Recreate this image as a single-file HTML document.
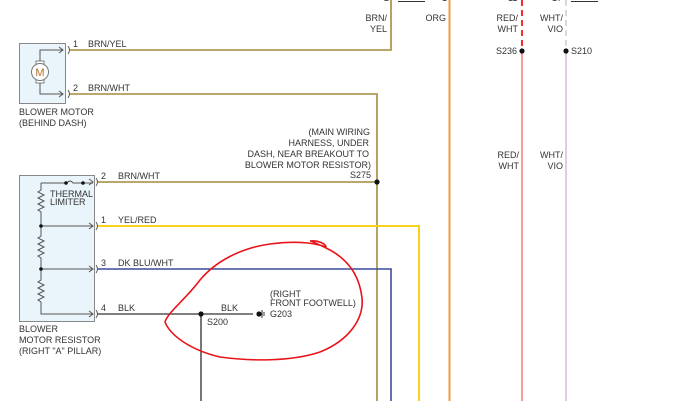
<!DOCTYPE html>
<html><head><style>
html,body{margin:0;padding:0;background:#fff;width:685px;height:401px;overflow:hidden}
svg text{font-family:"Liberation Sans",sans-serif;font-size:9px;fill:#333}
</style></head><body>
<svg width="685" height="401" viewBox="0 0 685 401" xmlns="http://www.w3.org/2000/svg">
<!-- top partial -->
<text x="384" y="1">2</text>
<text x="398" y="0">ABCDE</text>
<line x1="398" y1="1.5" x2="425" y2="1.5" stroke="#333"/>
<text x="442" y="1">1</text>
<text x="508" y="1">11</text>
<text x="552" y="1">17</text>
<text x="571" y="0">ABCDE</text>
<line x1="571" y1="1.5" x2="598" y2="1.5" stroke="#333"/>
<!-- vertical wires -->
<path d="M391 0V50H70" stroke="#a48a3c" stroke-width="1.6" fill="none"/>
<path d="M70 94H377V401" stroke="#a48a3c" stroke-width="1.6" fill="none"/>
<line x1="449.5" y1="0" x2="449.5" y2="401" stroke="#f39a3c" stroke-width="2"/>
<line x1="522" y1="0" x2="522" y2="50" stroke="#f01818" stroke-width="1.8" stroke-dasharray="6,4"/>
<line x1="522" y1="50" x2="522" y2="401" stroke="#f57a7a" stroke-width="1.5"/>
<line x1="566" y1="0" x2="566" y2="50" stroke="#ccc" stroke-width="1.5" stroke-dasharray="6,4"/>
<line x1="566" y1="50" x2="566" y2="401" stroke="#dcb5e6" stroke-width="1.5"/>
<circle cx="522" cy="51" r="2.6" fill="#111"/>
<circle cx="566" cy="51" r="2.6" fill="#111"/>
<text x="387" y="21" text-anchor="end">BRN/</text>
<text x="387" y="32" text-anchor="end">YEL</text>
<text x="446" y="21" text-anchor="end">ORG</text>
<text x="518" y="21" text-anchor="end">RED/</text>
<text x="518" y="32" text-anchor="end">WHT</text>
<text x="563" y="21" text-anchor="end">WHT/</text>
<text x="563" y="32" text-anchor="end">VIO</text>
<text x="517" y="54" text-anchor="end">S236</text>
<text x="571" y="54">S210</text>
<text x="519" y="158" text-anchor="end">RED/</text>
<text x="519" y="169" text-anchor="end">WHT</text>
<text x="563" y="158" text-anchor="end">WHT/</text>
<text x="563" y="169" text-anchor="end">VIO</text>
<!-- blower motor -->
<rect x="19.5" y="43.5" width="46" height="60" fill="#eaf5fb" stroke="#888"/>
<path d="M40 64V50H63M40 80V94H63" stroke="#555" fill="none"/>
<path d="M59 47l4 3-4 3M59 91l4 3-4 3" stroke="#555" fill="none"/>
<path d="M68 46q3 4 0 8M68 90q3 4 0 8" stroke="#555" fill="none"/>
<rect x="36" y="61" width="8" height="3" fill="#fff" stroke="#666" stroke-width=".8"/>
<rect x="36" y="80" width="8" height="3" fill="#fff" stroke="#666" stroke-width=".8"/>
<circle cx="40" cy="72" r="8.5" fill="#fff" stroke="#777"/>
<text x="40" y="76" text-anchor="middle" style="font-size:11px;fill:#b07020">M</text>
<text x="73" y="47">1</text><text x="88" y="47">BRN/YEL</text>
<text x="73" y="91">2</text><text x="88" y="91">BRN/WHT</text>
<text x="19" y="115">BLOWER MOTOR</text>
<text x="19" y="126">(BEHIND DASH)</text>
<text x="370" y="135" text-anchor="end">(MAIN WIRING</text>
<text x="369" y="146" text-anchor="end">HARNESS, UNDER</text>
<text x="369" y="157" text-anchor="end">DASH, NEAR BREAKOUT TO</text>
<text x="371" y="168" text-anchor="end">BLOWER MOTOR RESISTOR)</text>
<text x="371" y="178" text-anchor="end">S275</text>
<!-- resistor -->
<rect x="19.5" y="175.5" width="75" height="146" fill="#eaf5fb" stroke="#888"/>
<path d="M97 182H377" stroke="#a48a3c" stroke-width="1.6"/>
<circle cx="377" cy="182" r="2.6" fill="#111"/>
<path d="M97 226H419V401" stroke="#f7d21a" stroke-width="2" fill="none"/>
<path d="M97 269H391V401" stroke="#3a4c9a" stroke-width="1.6" fill="none"/>
<path d="M97 314H253" stroke="#555" stroke-width="1.6"/>
<line x1="201" y1="314" x2="201" y2="401" stroke="#555" stroke-width="1.6"/>
<circle cx="201" cy="314" r="2.6" fill="#111"/>
<circle cx="259" cy="314" r="2.6" fill="#111"/>
<path d="M262 310v8M264 312v4" stroke="#333"/>
<path d="M41 183H67q3-4 6 0H93M41 183V190l-3 2 6 3-6 3 6 3-6 3 6 3-6 3 3 2V226M41 226V236l-3 2 6 3-6 3 6 3-6 3 6 3-6 3 3 2V269M41 269V280l-3 2 6 3-6 3 6 3-6 3 6 3-6 3 3 2V314H93M41 226H93M41 269H93" stroke="#555" fill="none"/>
<circle cx="66" cy="183" r="1.8" fill="#111"/><circle cx="83" cy="183" r="1.8" fill="#111"/>
<circle cx="41" cy="226" r="1.8" fill="#111"/><circle cx="41" cy="269" r="1.8" fill="#111"/>
<path d="M89 179l4 3-4 3M89 223l4 3-4 3M89 266l4 3-4 3M89 311l4 3-4 3" stroke="#555" fill="none"/>
<path d="M96 178q3 4 0 8M96 222q3 4 0 8M96 265q3 4 0 8M96 310q3 4 0 8" stroke="#555" fill="none"/>
<text x="50" y="197">THERMAL</text><text x="50" y="205">LIMITER</text>
<text x="101" y="179">2</text><text x="118" y="179">BRN/WHT</text>
<text x="101" y="223">1</text><text x="118" y="223">YEL/RED</text>
<text x="101" y="266">3</text><text x="118" y="266">DK BLU/WHT</text>
<text x="101" y="311">4</text><text x="118" y="311">BLK</text>
<text x="221" y="311">BLK</text>
<text x="207" y="325">S200</text>
<text x="270" y="297">(RIGHT</text>
<text x="270" y="306">FRONT FOOTWELL)</text>
<text x="270" y="317">G203</text>
<text x="19" y="332">BLOWER</text>
<text x="19" y="343">MOTOR RESISTOR</text>
<text x="19" y="354">(RIGHT "A" PILLAR)</text>
<!-- red circle -->
<path d="M310 241C318 240 326 244 326 247C318 244 300 240 270 244C240 248 215 262 200 280C185 300 168 312 165 322C170 335 190 350 220 357C250 361 290 362 320 352C350 340 364 318 362 298C360 280 352 262 330 250C318 244 312 241 310 241" stroke="#e8141a" stroke-width="1.6" fill="none"/>
</svg>
</body></html>
